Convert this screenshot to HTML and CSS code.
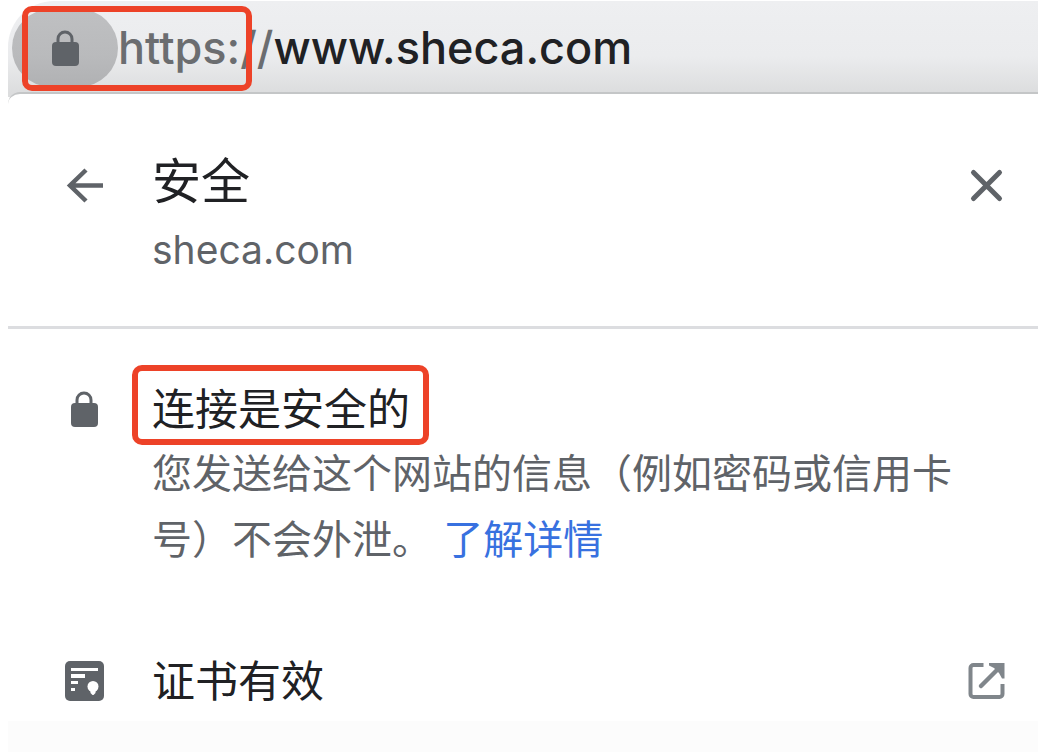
FILE: index.html
```html
<!DOCTYPE html>
<html lang="zh-CN">
<head>
<meta charset="utf-8">
<meta name="viewport" content="width=device-width, initial-scale=1">
<title>安全 - sheca.com</title>
<link rel="stylesheet" href="styles.css">
</head>
<body>
<header class="address">
  <button class="site-info" type="button" aria-label="查看网站信息">
    <svg class="lock" viewBox="0 0 28 36" aria-hidden="true"><path d="M7 13V9a7 7 0 0 1 14 0v4" fill="none" stroke="currentColor" stroke-width="3"/><rect x="1" y="12" width="27" height="24" rx="4" fill="currentColor"/></svg>
  </button>
  <div class="url"><span class="scheme">https://</span>www.sheca.com</div>
  <span class="mark mark-scheme"></span>
</header>
<main class="panel">
  <section class="top">
    <button class="icon-button" type="button" aria-label="返回">
      <svg class="icon" viewBox="0 0 40 40" aria-hidden="true"><path d="M39 19.500H6M22 4L6 19.500 22 35" fill="none" stroke="currentColor" stroke-width="4.500"/></svg>
    </button>
    <div class="text">
      <h1 class="title">安全</h1>
      <p class="domain">sheca.com</p>
    </div>
    <button class="icon-button" type="button" aria-label="关闭">
      <svg class="icon" viewBox="0 0 40 40" aria-hidden="true"><path d="M7.500 6.500l26 26M33.500 6.500l-26 26" fill="none" stroke="currentColor" stroke-width="5" stroke-linecap="round"/></svg>
    </button>
  </section>
  <section class="connection">
    <div class="lead">
      <svg class="lock" viewBox="0 0 28 36" aria-hidden="true"><path d="M7 13V9a7 7 0 0 1 14 0v4" fill="none" stroke="currentColor" stroke-width="3"/><rect x="1" y="12" width="27" height="24" rx="4" fill="currentColor"/></svg>
    </div>
    <div class="text">
      <h2 class="subtitle">连接是安全的<span class="mark mark-heading"></span></h2>
      <p class="detail">您发送给这个网站的信息（例如密码或信用卡号）不会外泄。 <a class="link" href="#">了解详情</a></p>
    </div>
  </section>
  <a class="certificate" href="#">
    <svg class="icon" viewBox="0 0 40 40" aria-hidden="true"><rect x="1" width="39" height="40" rx="5" fill="#5f6368"/><path d="M7 7h27v3H7zM7 13h14v4H7zM7 20h7v3H7zM7 27h4v3H7z" fill="#fff"/><circle cx="29" cy="25.500" r="5.500" fill="#fff"/><path d="M26.500 28h5v4l-2 2h-1l-2-2z" fill="#fff"/></svg>
    <span class="subtitle">证书有效</span>
    <svg class="icon external" viewBox="0 0 40 40" aria-hidden="true"><path d="M17.500 4H7.500a3 3 0 0 0-3 3v26a3 3 0 0 0 3 3h26a3 3 0 0 0 3-3V23" fill="none" stroke="currentColor" stroke-width="4"/><path d="M15 25L35 5" fill="none" stroke="currentColor" stroke-width="4.500" stroke-linecap="round"/><path d="M23 2h15.500v15.500H36L33 12l-5-5-5-2.500z" fill="currentColor"/></svg>
  </a>
</main>
</body>
</html>
```
FILE: styles.css
```css
* {
  box-sizing: border-box;
}

body {
  margin: 0;
  padding: 1px 0 0 8px;
  min-height: 100vh;
  display: flex;
  flex-direction: column;
  background: #fff;
  color: #202124;
  font-family: Inter, "Noto Sans CJK SC", sans-serif;
}

h1, h2, p {
  margin: 0;
  font-weight: 400;
}

button {
  border: 0;
  padding: 0;
  background: none;
  color: #5f6368;
}

.address {
  position: relative;
  display: flex;
  align-items: center;
  height: 96px;
  margin-bottom: -5px;
  padding: 0 4px 2px;
  border-radius: 46px 0 0 0;
  background: linear-gradient(#eeeff1 0, #ebecee 55px, #dcddde 92px);
}

.site-info {
  display: grid;
  place-items: center;
  width: 106px;
  height: 78px;
  border-radius: 39px;
  background: linear-gradient(#bfc0c2, #b9babc 60%, #b0b1b3);
}

.lock {
  display: block;
  width: 28px;
  height: 36px;
  color: #5f6368;
}

.url {
  font-size: 45px;
  font-weight: 500;
  line-height: 56px;
  white-space: nowrap;
}

.scheme {
  color: #6b6d70;
}

.mark {
  position: absolute;
  border: 6px solid #ed4228;
  border-radius: 10px;
  pointer-events: none;
}

.mark-scheme {
  left: 14px;
  top: 5px;
  width: 230px;
  height: 85px;
}

.panel {
  position: relative;
  border-top: 2px solid #c4c6c7;
  border-radius: 12px 0 0 0;
  background: linear-gradient(#fff 627px, #fcfcfc 627px);
  flex: 1;
}

.top, .connection {
  display: grid;
  grid-template-columns: 40px 1fr 40px;
  column-gap: 48px;
  padding-left: 56px;
  padding-right: 32px;
}

.top {
  padding-top: 56px;
  padding-bottom: 48px;
  border-bottom: 3px solid #dcdde0;
}

.icon-button {
  height: 72px;
  display: grid;
  place-items: center;
}

.icon {
  display: block;
  width: 40px;
  height: 40px;
  color: #5f6368;
}

.title {
  font-size: 49px;
  line-height: 64px;
}

.domain {
  padding-top: 8px;
  color: #5f6368;
  font-size: 39px;
  line-height: 56px;
}

.connection {
  grid-template-columns: 40px 1fr;
  padding-top: 48px;
}

.lead {
  display: grid;
  place-items: center;
  height: 64px;
}

.subtitle {
  position: relative;
  width: max-content;
  font-size: 43px;
  line-height: 64px;
}

.mark-heading {
  inset: -12px -19px -4px -20px;
}

.detail {
  max-width: 808px;
  color: #5f6368;
  font-size: 40px;
  line-height: 66px;
}

.link {
  color: #3871e0;
  text-decoration: none;
}

.certificate {
  display: grid;
  grid-template-columns: 40px 1fr 40px;
  column-gap: 48px;
  align-items: center;
  padding: 76px 32px 0 56px;
  color: inherit;
  text-decoration: none;
}

.external {
  color: #80868b;
}
```
